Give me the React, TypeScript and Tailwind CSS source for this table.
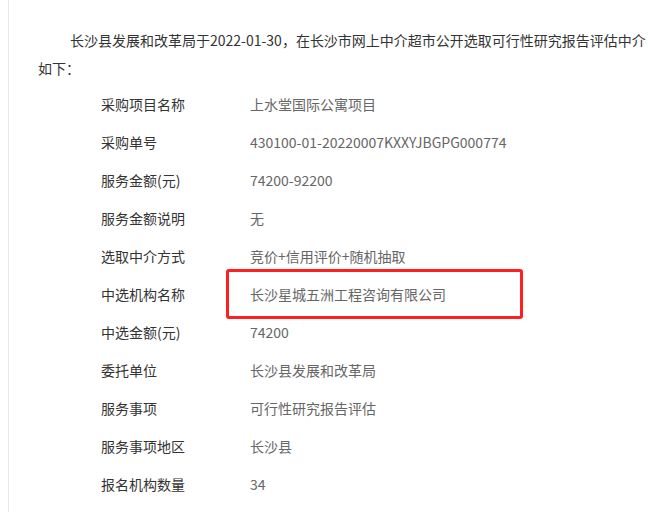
const rows: [string, string][] = [
  ["采购项目名称", "上水堂国际公寓项目"],
  ["采购单号", "430100-01-20220007KXXYJBGPG000774"],
  ["服务金额(元)", "74200-92200"],
  ["服务金额说明", "无"],
  ["选取中介方式", "竞价+信用评价+随机抽取"],
  ["中选机构名称", "长沙星城五洲工程咨询有限公司"],
  ["中选金额(元)", "74200"],
  ["委托单位", "长沙县发展和改革局"],
  ["服务事项", "可行性研究报告评估"],
  ["服务事项地区", "长沙县"],
  ["报名机构数量", "34"],
];

export default function App() {
  return (
    <div
      className="h-[512px] w-[648px] overflow-hidden bg-white"
      style={{ fontFamily: '"Noto Sans CJK SC", "Noto Sans", sans-serif' }}
    >
      <div className="ml-[8px] h-full border-l border-[#e8e8e8] pt-[26px]">
        <p className="whitespace-nowrap pl-[29px] text-[14px] leading-[28px] text-[#333] [text-indent:32px]">
          长沙县发展和改革局于2022-01-30，在长沙市网上中介超市公开选取可行性研究报告评估中介
          <br />
          如下：
        </p>
        <div className="mt-[3px] pl-[92px]">
          {rows.map(([label, value], i) => (
            <div key={label} className="relative grid h-[38px] grid-cols-[149px_1fr] items-center text-[14px]">
              <span className="text-[#333]">{label}</span>
              <span className="text-[#666]">{value}</span>
              {i === 5 && (
                <div className="absolute left-[125px] top-[-6px] h-[50px] w-[297px] rounded-[3px] border-[3px] border-[#ff1f1f]" />
              )}
            </div>
          ))}
        </div>
      </div>
    </div>
  );
}
